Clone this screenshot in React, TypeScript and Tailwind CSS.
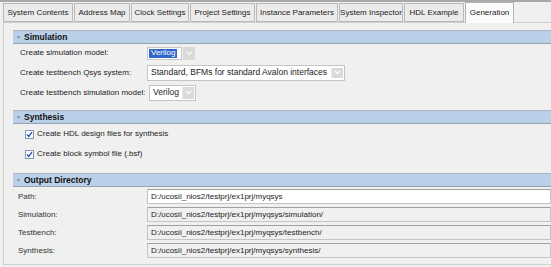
import React from "react";

const tabs = [
  { label: "System Contents", w: 70 },
  { label: "Address Map", w: 56 },
  { label: "Clock Settings", w: 58 },
  { label: "Project Settings", w: 65 },
  { label: "Instance Parameters", w: 82 },
  { label: "System Inspector", w: 64 },
  { label: "HDL Example", w: 60 },
  { label: "Generation", w: 49, active: true },
];

function Arrow() {
  return (
    <div className="w-[12px] h-full bg-[#dadada] border-l border-[#e8e8e8] flex items-center justify-center">
      <svg width="7" height="5" viewBox="0 0 7 5">
        <path d="M1 1 L3.5 3.5 L6 1" fill="none" stroke="#ffffff" strokeWidth="1.2" />
      </svg>
    </div>
  );
}

function Header({ title }: { title: string }) {
  return (
    <div className="h-[14px] bg-[#b9d0e8] border-t border-b border-t-[#a9b5c2] border-b-[#95a3b3] flex items-center pl-[3px] font-bold text-[8.5px] text-[#111]">
      <span className="w-[8px] text-[5px] text-[#7d8a98] leading-none">▼</span>
      <span>{title}</span>
    </div>
  );
}

function Check({ label }: { label: string }) {
  return (
    <div className="h-[20px] flex items-center pl-[12px]">
      <div className="w-[9px] h-[9px] bg-white border border-[#7f97b5] flex items-center justify-center mr-[3px]">
        <svg width="7" height="7" viewBox="0 0 7 7">
          <path d="M1 3.5 L2.8 5.5 L6 1.2" fill="none" stroke="#2a56b0" strokeWidth="1.4" />
        </svg>
      </div>
      <span>{label}</span>
    </div>
  );
}

function PathRow({ label, value, white }: { label: string; value: string; white?: boolean }) {
  return (
    <div className="h-[15px] flex items-center">
      <span className="w-[134px] shrink-0 pl-[5px] text-[#333]">{label}</span>
      <div
        className={`flex-1 h-[15px] border border-[#c4c4c4] border-t-[#a0a0a0] flex items-center pl-[3px] whitespace-nowrap ${
          white ? "bg-white" : "bg-[#f0f0f0]"
        }`}
      >
        {value}
      </div>
    </div>
  );
}

export default function App() {
  return (
    <div className="w-[551px] h-[267px] bg-[#f0f0f0] overflow-hidden font-['Liberation_Sans',Arial,sans-serif] text-[8px] text-[#1c1c1c] leading-none">
      <div className="h-[2px] bg-[#a8a8a8]" />
      <div className="flex items-end gap-[1px] pl-[3px] h-[21px]">
        {tabs.map((t) =>
          t.active ? (
            <div
              key={t.label}
              style={{ width: t.w }}
              className="shrink-0 whitespace-nowrap h-[21px] bg-[#fbfbfb] border border-b-0 border-[#b4b4b4] flex items-center justify-center pb-[1px] relative z-10"
            >
              {t.label}
            </div>
          ) : (
            <div
              key={t.label}
              style={{ width: t.w }}
              className="shrink-0 whitespace-nowrap h-[19px] mb-[1px] bg-[#ebebeb] border border-[#b8b8b8] flex items-center justify-center"
            >
              {t.label}
            </div>
          )
        )}
      </div>
      <div className="ml-[3px] -mt-[1px] border-l border-t border-b border-[#cfcfcf] h-[243px] pl-[9px] pt-[7px]">
        <Header title="Simulation" />
        <div className="pl-[7px]">
          <div className="h-[16px] mt-[1px] flex items-center">
            <span className="w-[127px]">Create simulation model:</span>
            <div className="h-[13px] w-[48px] flex">
              <div className="w-[36px] h-full bg-white border border-[#c8c8c8] p-[1px] flex">
                <span className="bg-[#2f66c8] text-white px-[2px] flex items-center">Verilog</span>
              </div>
              <div className="w-[12px] h-full ml-[1px] bg-[#dadada] flex items-center justify-center">
                <svg width="7" height="5" viewBox="0 0 7 5">
                  <path d="M1 1 L3.5 3.5 L6 1" fill="none" stroke="#ffffff" strokeWidth="1.2" />
                </svg>
              </div>
            </div>
          </div>
          <div className="h-[17px] mt-[3px] flex items-center">
            <span className="w-[127px]">Create testbench Qsys system:</span>
            <div className="h-[16px] w-[198px] flex bg-white border border-[#c4c4c4]">
              <span className="flex-1 flex items-center pl-[3px] text-[8.5px]">Standard, BFMs for standard Avalon interfaces</span>
              <div className="py-[2px] pr-[1px] h-full">
                <Arrow />
              </div>
            </div>
          </div>
          <div className="h-[17px] mt-[3px] flex items-center">
            <span className="w-[129px]">Create testbench simulation model:</span>
            <div className="h-[16px] w-[47px] flex bg-white border border-[#c4c4c4]">
              <span className="flex-1 flex items-center pl-[3px] text-[8.5px]">Verilog</span>
              <div className="py-[1px] pr-[1px] h-full">
                <Arrow />
              </div>
            </div>
          </div>
        </div>
        <div className="mt-[9px]">
          <Header title="Synthesis" />
          <Check label="Create HDL design files for synthesis" />
          <Check label="Create block symbol file (.bsf)" />
        </div>
        <div className="mt-[9px]">
          <Header title="Output Directory" />
          <div className="mt-[2px] flex flex-col gap-[3px]">
            <PathRow label="Path:" value="D:/ucosii_nios2/testprj/ex1prj/myqsys" white />
            <PathRow label="Simulation:" value="D:/ucosii_nios2/testprj/ex1prj/myqsys/simulation/" />
            <PathRow label="Testbench:" value="D:/ucosii_nios2/testprj/ex1prj/myqsys/testbench/" />
            <PathRow label="Synthesis:" value="D:/ucosii_nios2/testprj/ex1prj/myqsys/synthesis/" />
          </div>
        </div>
      </div>
    </div>
  );
}
